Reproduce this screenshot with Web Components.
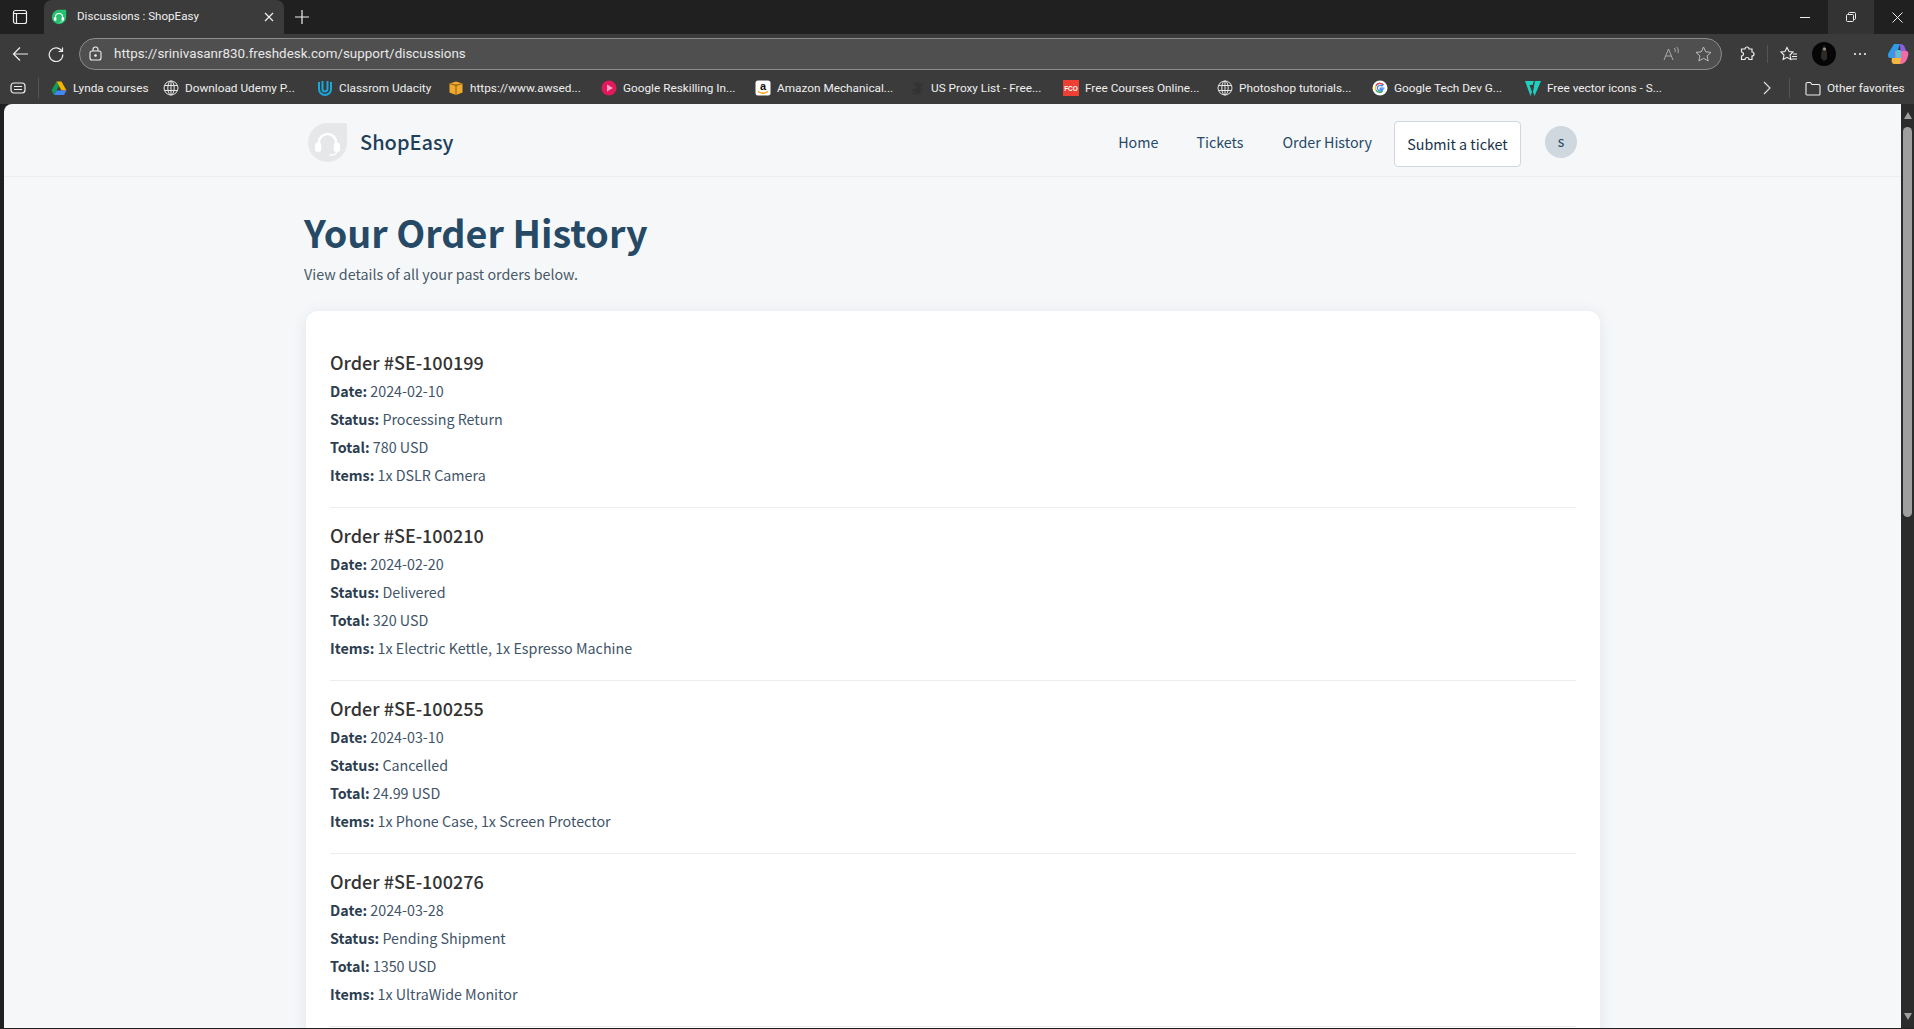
<!DOCTYPE html>
<html lang="en">
<head>
<meta charset="utf-8">
<title>Discussions : ShopEasy</title>
<style>
  html, body { margin: 0; height: 100%; overflow: hidden; background: #3b3b3b; }
  body { display: flex; flex-direction: column; font-family: Roboto, sans-serif; }
</style>
</head>
<body>
<tab-strip></tab-strip>
<address-toolbar url="https://srinivasanr830.freshdesk.com/support/discussions"></address-toolbar>
<bookmark-bar>
  <bookmark-item w="112" icon="drive">Lynda courses</bookmark-item>
  <bookmark-item w="154" icon="globe">Download Udemy P...</bookmark-item>
  <bookmark-item w="131" icon="udacity">Classrom Udacity</bookmark-item>
  <bookmark-item w="153" icon="aws">https://www.awsed...</bookmark-item>
  <bookmark-item w="154" icon="play">Google Reskilling In...</bookmark-item>
  <bookmark-item w="154" icon="amazon">Amazon Mechanical...</bookmark-item>
  <bookmark-item w="154" icon="leaf">US Proxy List - Free...</bookmark-item>
  <bookmark-item w="154" icon="fco">Free Courses Online...</bookmark-item>
  <bookmark-item w="155" icon="globe">Photoshop tutorials...</bookmark-item>
  <bookmark-item w="153" icon="google">Google Tech Dev G...</bookmark-item>
  <bookmark-item w="140" icon="vector">Free vector icons - S...</bookmark-item>
</bookmark-bar>
<page-frame>
  <store-header></store-header>
  <order-page>
    <order-entry number="SE-100199">
      <order-field label="Date:">2024-02-10</order-field>
      <order-field label="Status:">Processing Return</order-field>
      <order-field label="Total:">780 USD</order-field>
      <order-field label="Items:">1x DSLR Camera</order-field>
    </order-entry>
    <order-entry number="SE-100210">
      <order-field label="Date:">2024-02-20</order-field>
      <order-field label="Status:">Delivered</order-field>
      <order-field label="Total:">320 USD</order-field>
      <order-field label="Items:">1x Electric Kettle, 1x Espresso Machine</order-field>
    </order-entry>
    <order-entry number="SE-100255">
      <order-field label="Date:">2024-03-10</order-field>
      <order-field label="Status:">Cancelled</order-field>
      <order-field label="Total:">24.99 USD</order-field>
      <order-field label="Items:">1x Phone Case, 1x Screen Protector</order-field>
    </order-entry>
    <order-entry number="SE-100276">
      <order-field label="Date:">2024-03-28</order-field>
      <order-field label="Status:">Pending Shipment</order-field>
      <order-field label="Total:">1350 USD</order-field>
      <order-field label="Items:">1x UltraWide Monitor</order-field>
    </order-entry>
  </order-page>
</page-frame>

<script>
// headset mark, used by the favicon and the store logo
const HEADSET = '<path d="M5.600 12V10a4.400 4.400 0 0 1 8.800 0v2" fill="none" stroke="#fff" stroke-width="1.300"/><rect x="3.600" y="10" width="3.200" height="4.800" rx="1.400" fill="#fff"/><rect x="13.200" y="10" width="3.200" height="4.800" rx="1.400" fill="#fff"/><path d="M14.800 14.500c0 1.500-1.500 2-3.800 2" fill="none" stroke="#fff" stroke-width=".7"/>';

const BOOKMARK_ICONS = {
  drive: '<path d="M5.500 1.500h5L15.500 10.500h-5z" fill="#f4b400"/><path d="M5.500 1.500L.5 10.500 3 15 8 6z" fill="#0f9d58"/><path d="M3 15h10l2.500-4.500h-10z" fill="#4285f4"/>',
  globe: '<g fill="none" stroke="#e6e6e6" stroke-width="1"><circle cx="8" cy="8" r="7"/><ellipse cx="8" cy="8" rx="3.200" ry="7"/><path d="M8 1v14M1.500 5.500h13M1.500 10.500h13"/></g>',
  udacity: '<path d="M2 2v7a6 6 0 0 0 12 0V2M5.500 1v8a2.500 2.500 0 0 0 5 0V1" fill="none" stroke="#19a8dc" stroke-width="2"/>',
  aws: '<path d="M1.500 3.500L8 1.500l6.500 2v9L8 15l-6.500-2.500z" fill="#f0ab2e"/><path d="M8 4v11M1.500 3.500L8 5.500l6.500-2" fill="none" stroke="#8a5f10" stroke-width="1"/>',
  play: '<circle cx="8" cy="8" r="7.500" fill="#e3175c"/><path d="M6 4.500l6 3.500-6 3.500z" fill="#f7a8c0"/>',
  amazon: '<rect x=".5" y=".5" width="15" height="15" rx="2.500" fill="#fff"/><text x="8" y="9.500" text-anchor="middle" font-family="Liberation Sans" font-weight="700" font-size="11" fill="#111">a</text><path d="M3 11.500c3 2 7 2 10 0" fill="none" stroke="#f90" stroke-width="1.400"/>',
  leaf: '<path d="M8 8L3 2l5 2 1-3 1 3 4-1-3 5 4 1-4 2 2 4-4-2-1 3-1-3-4 2 2-4-3-1z" fill="#333"/>',
  fco: '<rect width="16" height="16" fill="#ee3f32"/><text x="8" y="10.500" text-anchor="middle" font-family="Liberation Sans" font-weight="700" font-size="6.500" fill="#fff">FCO</text>',
  google: '<circle cx="8" cy="8" r="7.500" fill="#fff"/><path d="M12.500 8.200H8.200v1.500h2.500A2.900 2.900 0 1 1 10 5.900l1.100-1.100A4.400 4.400 0 0 0 4 5.600" fill="none" stroke="#4285f4" stroke-width="1.300"/><path d="M4 5.600a4.400 4.400 0 0 0 0 4.800" fill="none" stroke="#fbbc05" stroke-width="1.300"/><path d="M4 10.400a4.400 4.400 0 0 0 6.700.9" fill="none" stroke="#34a853" stroke-width="1.300"/><path d="M4 5.600A4.400 4.400 0 0 1 11.100 4.800" fill="none" stroke="#ea4335" stroke-width="1.300"/>',
  vector: '<path d="M0 1h9L7.500 5H4.500L7 12l-1.500 4z" fill="#1fd0c0"/><path d="M10 1h6l-6.500 15-1.500-4z" fill="#1fd0c0"/>'
};

class TabStrip extends HTMLElement {
  constructor() {
    super();
    this.attachShadow({ mode: 'open' }).innerHTML = `
      <style>
        :host { display: flex; align-items: stretch; height: 34px; background: #202020; color: #f0f0f0; font: 11.600px Roboto, sans-serif; flex: none; }
        .side { width: 40px; margin-right: 4px; display: flex; align-items: center; justify-content: center; }
        .tab { width: 240px; background: #3b3b3b; border-radius: 8px 8px 0 0; display: flex; align-items: center; padding-left: 7px; box-sizing: border-box; }
        .tab span { margin-left: 10px; flex: 1; position: relative; top: -1px; }
        .tab .x { margin-right: 10px; }
        .plus { width: 36px; display: flex; align-items: center; justify-content: center; }
        .grow { flex: 1; }
        .ctl { width: 46px; display: flex; align-items: center; justify-content: center; }
        .ctl.on { background: #333; }
        .close { width: 40px; padding-left: 6px; box-sizing: border-box; }
      </style>
      <div class="side"><svg width="16" height="16" viewBox="0 0 16 16" fill="none" stroke="#eee" stroke-width="1.200"><rect x="1.500" y="1.500" width="13" height="13" rx="2"/><path d="M1.500 4.500h13M4.500 4.500v10"/></svg></div>
      <div class="tab">
        <svg width="16" height="16" viewBox="0 0 20 20"><path d="M10 1h8a1 1 0 0 1 1 1v8a9 9 0 1 1-9-9z" fill="#25c16f"/>${HEADSET}</svg>
        <span>Discussions : ShopEasy</span>
        <svg class="x" width="10" height="10" viewBox="0 0 10 10" stroke="#eee" stroke-width="1.200"><path d="M1 1l8 8M9 1l-8 8"/></svg>
      </div>
      <div class="plus"><svg width="14" height="14" viewBox="0 0 14 14" stroke="#eee" stroke-width="1.200"><path d="M7 0v14M0 7h14"/></svg></div>
      <div class="grow"></div>
      <div class="ctl"><svg width="10" height="10" viewBox="0 0 10 10" stroke="#eee"><path d="M0 5.500h10"/></svg></div>
      <div class="ctl on"><svg width="10" height="10" viewBox="0 0 10 10" fill="none" stroke="#eee"><rect x=".5" y="2.500" width="7" height="7" rx="1"/><path d="M2.500 2.500V1.500a1 1 0 0 1 1-1h5a1 1 0 0 1 1 1v5a1 1 0 0 1-1 1h-1"/></svg></div>
      <div class="ctl close"><svg width="11" height="11" viewBox="0 0 11 11" stroke="#eee"><path d="M.5.500l10 10M10.500.500l-10 10"/></svg></div>
    `;
  }
}

class AddressToolbar extends HTMLElement {
  constructor() {
    super();
    const url = this.getAttribute('url') || '';
    this.attachShadow({ mode: 'open' }).innerHTML = `
      <style>
        :host { display: flex; align-items: center; height: 36px; background: #3b3b3b; flex: none; padding-left: 12px; padding-top: 3px; box-sizing: border-box; }
        svg { display: block; flex: none; }
        .bar { margin-left: 15px; width: 1643px; height: 32px; box-sizing: border-box; background: #4f4f4f; border: 1px solid #8c8c8c; border-radius: 16px; display: flex; align-items: center; padding-left: 9px; color: #e8e8e8; font: 13.400px Roboto, sans-serif; }
        .url { margin-left: 12px; flex: 1; }
        .bar .r { margin-right: 9px; }
        .bar .ra { margin-right: 15px; }
        .tools { display: flex; align-items: center; margin-left: 17px; }
      </style>
      <svg width="17" height="16" viewBox="0 0 17 16" fill="none" stroke="#eee" stroke-width="1.200"><path d="M16 8H1.500M8 1.500L1.500 8 8 14.500"/></svg>
      <svg style="margin-left:19px" width="16" height="16" viewBox="0 0 16 16" fill="none" stroke="#eee" stroke-width="1.200"><path d="M14 5.500A6.800 6.800 0 1 0 14.800 8.500M14.500 1.500v4h-4"/></svg>
      <div class="bar">
        <svg width="13" height="15" viewBox="0 0 13 15" fill="none" stroke="#eee" stroke-width="1.100"><rect x="1" y="5" width="11" height="9" rx="2"/><path d="M4 5V3.500a2.500 2.500 0 0 1 5 0V5"/><circle cx="6.500" cy="9.500" r=".8" fill="#eee"/></svg>
        <span class="url">${url}</span>
        <svg class="ra" width="17" height="16" viewBox="0 0 17 16" fill="none" stroke="#aaa" stroke-width="1"><path d="M1 14L5.500 3 10 14M2.800 10h5.400M11 2c1.500 1 1.500 3 1 4M13.500 1c2 1.500 2 4 1.500 6"/></svg>
        <svg class="r" width="17" height="16" viewBox="0 0 17 16" fill="none" stroke="#bbb" stroke-width="1"><path d="M8.500 1l2.200 4.800 5.300.6-3.900 3.500 1.100 5.100-4.700-2.700L3.800 15l1.100-5.100L1 6.400l5.300-.6z"/></svg>
      </div>
      <div class="tools">
        <svg width="16" height="16" viewBox="0 0 16 16" fill="none" stroke="#eee" stroke-width="1.200"><path d="M6 3a2 2 0 0 1 4 0h3v3a2 2 0 0 1 0 4v3.500H10a2 2 0 0 0-4 0H2.500V10a2 2 0 0 0 0-4V3z"/></svg>
        <div style="width:1px;height:18px;background:#555;margin:0 12px"></div>
        <svg width="18" height="16" viewBox="0 0 18 16" fill="none" stroke="#eee" stroke-width="1.100"><path d="M7 1.500L9 5.500l4 .5-3 3 .8 4.500L7 11.300 3.200 13.500 4 9 1 6l4-.5zM13 8h4M12 10.500h5M11.500 13h5.500"/></svg>
        <svg style="margin-left:14px" width="24" height="24" viewBox="0 0 24 24"><circle cx="12" cy="12" r="12" fill="#060606"/><path d="M12 3c2 2 3.500 7 3 14l-3 2-3-3c0-6 1-10 3-13z" fill="#2d2a28"/><circle cx="12.500" cy="7" r="1.600" fill="#9c8f82"/></svg>
        <svg style="margin-left:17px" width="14" height="4" viewBox="0 0 14 4" fill="#eee"><circle cx="2" cy="2" r="1.100"/><circle cx="7" cy="2" r="1.100"/><circle cx="12" cy="2" r="1.100"/></svg>
        <svg style="margin-left:20px" width="22" height="22" viewBox="0 0 22 22"><path d="M7 1h6l-5 14H3C1 15 .5 12 1.500 10z" fill="#2f9be8"/><path d="M13 1c3 0 4 1.500 5 4l3 8-7 1z" fill="#8e5fe0"/><path d="M8 8h11c2 0 3 2 2 5-1 4-3 8-7 8H8z" fill="#f06aa8"/><path d="M8 15h6l-1 6H7c-2 0-3-3-2-6z" fill="#f5b63c"/><rect x="9" y="7" width="5" height="8" rx="1.500" fill="#4fc6d8"/></svg>
      </div>
    `;
  }
}

class BookmarkBar extends HTMLElement {
  constructor() {
    super();
    this.attachShadow({ mode: 'open' }).innerHTML = `
      <style>
        :host { display: flex; align-items: center; height: 34px; background: #3b3b3b; color: #efefef; font: 11.800px Roboto, sans-serif; flex: none; padding-left: 10px; padding-top: 2px; box-sizing: border-box; white-space: nowrap; }
        svg { display: block; flex: none; }
        .sep { width: 1px; height: 20px; background: #555; }
        .items { display: flex; align-items: center; width: 1724px; }
        .other { display: flex; align-items: center; gap: 6px; margin-left: 15px; }
      </style>
      <svg width="16" height="14" viewBox="0 0 16 14" fill="none" stroke="#eee" stroke-width="1.200"><rect x="1" y="2" width="14" height="10" rx="3"/><path d="M4 5.500h8M4 8.500h8"/></svg>
      <div class="sep" style="margin:0 12px"></div>
      <div class="items"><slot></slot>
        <svg style="margin-left:auto;margin-right:4px" width="8" height="14" viewBox="0 0 8 14" fill="none" stroke="#ddd" stroke-width="1.200"><path d="M1 1l6 6-6 6"/></svg>
      </div>
      <div class="sep" style="margin-left:14px"></div>
      <div class="other">
        <svg width="16" height="15" viewBox="0 0 16 15" fill="none" stroke="#eee" stroke-width="1.100"><path d="M1 13V3a1.500 1.500 0 0 1 1.500-1.500h3L7 3.500h6.500A1.500 1.500 0 0 1 15 5v8a1 1 0 0 1-1 1H2a1 1 0 0 1-1-1z"/></svg>
        <span>Other favorites</span>
      </div>
    `;
  }
}

class BookmarkItem extends HTMLElement {
  constructor() {
    super();
    const icon = BOOKMARK_ICONS[this.getAttribute('icon')] || '';
    this.attachShadow({ mode: 'open' }).innerHTML = `
      <style>
        :host { display: flex; align-items: center; gap: 6px; width: ${this.getAttribute('w')}px; flex: none; }
        svg { display: block; flex: none; }
      </style>
      <svg width="16" height="16" viewBox="0 0 16 16">${icon}</svg><span><slot></slot></span>
    `;
  }
}

class PageFrame extends HTMLElement {
  constructor() {
    super();
    this.attachShadow({ mode: 'open' }).innerHTML = `
      <style>
        :host { display: flex; flex: 1; min-height: 0; padding: 0 0 1px 4px; background: #202020; box-sizing: border-box; }
        .view { flex: 1; min-width: 0; overflow: hidden; background: #f5f7f9; border-top-left-radius: 8px; font-family: "Noto Sans CJK SC", sans-serif; }
        .track { width: 13px; flex: none; background: #2b2b2b; display: flex; flex-direction: column; align-items: center; padding-top: 8px; box-sizing: border-box; }
        .up, .down { width: 0; height: 0; border-left: 4.500px solid transparent; border-right: 4.500px solid transparent; }
        .up { border-bottom: 7px solid #9f9f9f; }
        .down { border-top: 7px solid #9f9f9f; margin: auto 0 8px; }
        .thumb { width: 9px; height: 390px; border-radius: 5px; background: #9f9f9f; margin-top: 8px; }
      </style>
      <div class="view"><slot></slot></div>
      <div class="track"><div class="up"></div><div class="thumb"></div><div class="down"></div></div>
    `;
  }
}

class StoreHeader extends HTMLElement {
  constructor() {
    super();
    this.attachShadow({ mode: 'open' }).innerHTML = `
      <style>
        :host { display: flex; align-items: center; height: 73px; box-sizing: border-box; border-bottom: 1px solid #ebedf0; padding: 4px 324px 0 304px; color: #264966; }
        svg { display: block; }
        .brand { font-size: 20px; font-weight: 500; line-height: 30px; margin-left: 13px; color: #1e3f5a; }
        nav { margin-left: auto; display: flex; align-items: center; font-size: 14.300px; line-height: 24px; }
        nav a:nth-child(1) { margin-right: 38px; margin-left: 1px; }
        nav a:nth-child(2) { margin-right: 39px; }
        nav a:nth-child(3) { margin-right: 22px; }
        .btn { display: block; box-sizing: border-box; width: 127px; height: 46px; margin-top: 3px; line-height: 43px; text-align: center; background: #fff; border: 1px solid #cfd7df; border-radius: 4px; color: #183247; }
        .me { width: 32px; height: 32px; border-radius: 50%; background: #cfd7df; margin-left: 24px; text-align: center; line-height: 30px; font-size: 14px; }
      </style>
      <svg width="39" height="39" viewBox="0 0 20 20"><path d="M10 0h9a1 1 0 0 1 1 1v9a10 10 0 1 1-10-10z" fill="#e5e7e9"/>${HEADSET}</svg>
      <span class="brand">ShopEasy</span>
      <nav><a>Home</a><a>Tickets</a><a>Order History</a><a class="btn">Submit a ticket</a><span class="me">s</span></nav>
    `;
  }
}

class OrderPage extends HTMLElement {
  constructor() {
    super();
    this.attachShadow({ mode: 'open' }).innerHTML = `
      <style>
        :host { display: block; padding: 30px 0 0 300px; width: 1597px; box-sizing: border-box; }
        h1 { margin: 0; font-size: 37.700px; line-height: 50px; font-weight: 700; color: #264966; }
        p { margin: 5px 0 0; font-size: 14.300px; line-height: 24px; color: #475867; }
        .card { margin: 25px 0 0 2px; width: 1294px; box-sizing: border-box; background: #fff; border-radius: 12px; box-shadow: 0 2px 16px rgba(24, 50, 71, .08); padding: 24px 24px 60px; }
      </style>
      <h1>Your Order History</h1>
      <p>View details of all your past orders below.</p>
      <div class="card"><slot></slot></div>
    `;
  }
}

class OrderEntry extends HTMLElement {
  constructor() {
    super();
    this.attachShadow({ mode: 'open' }).innerHTML = `
      <style>
        :host { display: block; height: 173px; box-sizing: border-box; padding-top: 14px; border-bottom: 1px solid #ebedf0; }
        h3 { margin: 0 0 2px; font-size: 18px; font-weight: 500; line-height: 26px; color: #333; }
      </style>
      <h3>Order #${this.getAttribute('number')}</h3>
      <slot></slot>
    `;
  }
}

class OrderField extends HTMLElement {
  constructor() {
    super();
    this.attachShadow({ mode: 'open' }).innerHTML = `
      <style>
        :host { display: block; font-size: 14.300px; line-height: 28px; color: #3f5468; }
        b { font-weight: 700; color: #2c3e50; }
      </style>
      <b>${this.getAttribute('label')}</b> <slot></slot>
    `;
  }
}

customElements.define('tab-strip', TabStrip);
customElements.define('address-toolbar', AddressToolbar);
customElements.define('bookmark-bar', BookmarkBar);
customElements.define('bookmark-item', BookmarkItem);
customElements.define('page-frame', PageFrame);
customElements.define('store-header', StoreHeader);
customElements.define('order-page', OrderPage);
customElements.define('order-entry', OrderEntry);
customElements.define('order-field', OrderField);
</script>
</body>
</html>
